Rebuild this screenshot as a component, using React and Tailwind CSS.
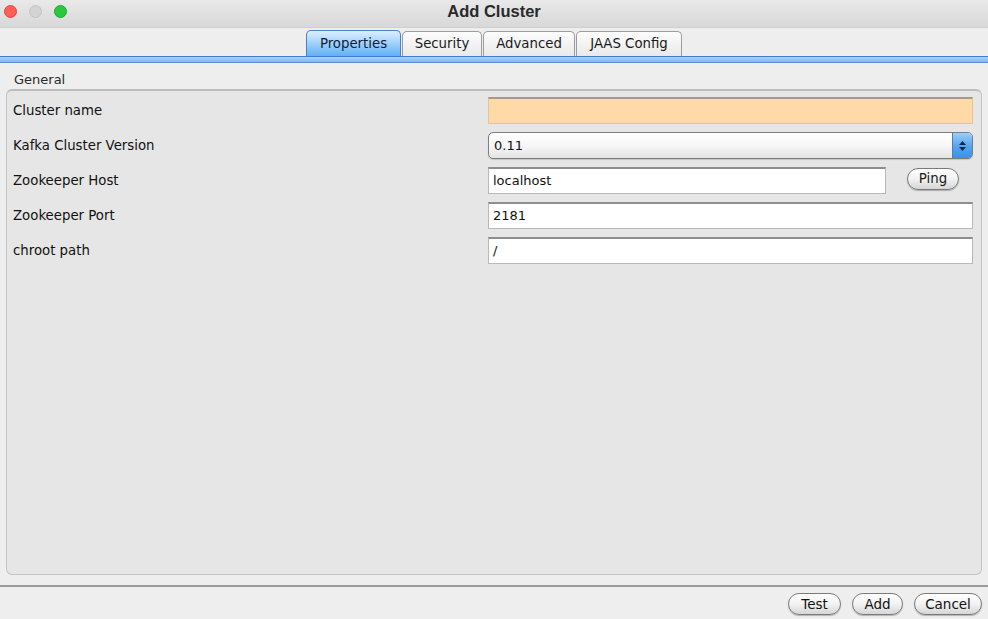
export default function App() {
  const font = { fontFamily: '"DejaVu Sans", "Noto Sans", sans-serif' };
  const rows = [
    { label: "Cluster name", kind: "orange" },
    { label: "Kafka Cluster Version", kind: "combo", value: "0.11" },
    { label: "Zookeeper Host", kind: "ping", value: "localhost" },
    { label: "Zookeeper Port", kind: "text", value: "2181" },
    { label: "chroot path", kind: "text", value: "/" },
  ];
  const field =
    "h-[27px] border border-[#b9b9b9] border-t-[#8e8e8e] border-t-2 flex items-center px-[4px] text-[13px] text-[#111]";
  return (
    <div
      className="w-[988px] h-[619px] bg-[#eeeeee] flex flex-col overflow-hidden text-[#1a1a1a]"
      style={font}
    >
      {/* Title bar */}
      <div className="relative h-[28px] shrink-0 bg-gradient-to-b from-[#e9e9e9] to-[#d8d8d8] border-b border-[#cfcfcf]">
        <div className="absolute left-[4px] top-[5px] flex gap-[12px]">
          <div className="w-[13px] h-[13px] rounded-full bg-[#fe5f57] border border-[#e2463f]" />
          <div className="w-[13px] h-[13px] rounded-full bg-[#d3d3d3] border border-[#c4c4c4]" />
          <div className="w-[13px] h-[13px] rounded-full bg-[#29c83f] border border-[#1eaa30]" />
        </div>
        <div
          className="text-center pt-0 leading-[22px] text-[16.5px] font-bold text-[#2a2a2a]"
          style={{ fontFamily: '"Liberation Sans", Arial, sans-serif' }}
        >
          Add Cluster
        </div>
      </div>

      {/* Tabs */}
      <div className="flex justify-center gap-[1px] pt-[1px] h-[28px] shrink-0 items-end">
        <div className="h-[26px] w-[95px] rounded-t-[5px] border border-b-0 border-[#4d7fc4] bg-gradient-to-b from-[#dcefff] via-[#9fd0fb] to-[#5fb0f4] flex items-center justify-center text-[13.3px] text-[#0d1d3a]">
          Properties
        </div>
        {[
          ["Security", "w-[80px]"],
          ["Advanced", "w-[92px]"],
          ["JAAS Config", "w-[106px]"],
        ].map(([t, w]) => (
          <div
            key={t}
            className={`h-[25px] ${w} rounded-t-[5px] border border-b-0 border-[#9c9c9c] bg-gradient-to-b from-[#fdfdfd] to-[#e9e9e9] flex items-center justify-center text-[13.3px] text-[#1a1a1a]`}
          >
            {t}
          </div>
        ))}
      </div>
      <div className="h-[7px] shrink-0 border-t border-[#3f7cc8] border-b border-b-[#5c8fcf] bg-gradient-to-b from-[#a8d3fa] to-[#7db9f2]" />

      {/* General group */}
      <div className="px-[14px] pt-[9px] text-[13px] text-[#2a2a2a] leading-[15px]">
        General
      </div>
      <div className="mx-[6px] mt-[2px] flex-1 rounded-[6px] border border-[#c4c4c4] border-t-2 border-t-[#bdbdbd] bg-[#e6e6e6] pt-[6px] pl-[6px] pr-[8px] flex flex-col gap-[8px]">
        {rows.map((r) => (
          <div key={r.label} className="flex items-center h-[27px]">
            <div className="w-[475px] shrink-0 text-[13.3px] text-[#111]">{r.label}</div>
            {r.kind === "orange" && (
              <div className={`${field} flex-1 bg-[#ffdaa8] border-[#e5c598] border-t-[#a79a88]`} />
            )}
            {r.kind === "text" && (
              <div className={`${field} flex-1 bg-white`}>{r.value}</div>
            )}
            {r.kind === "ping" && (
              <>
                <div className={`${field} w-[398px] bg-white`}>{r.value}</div>
                <div className="ml-[21px] h-[22px] w-[52px] -mt-[4px] rounded-full border border-[#7a7a7a] bg-gradient-to-b from-white via-[#f2f2f2] to-[#d6d6d6] flex items-center justify-center text-[13.3px] shadow-[0_1px_1px_rgba(0,0,0,0.25)]">
                  Ping
                </div>
              </>
            )}
            {r.kind === "combo" && (
              <div className="flex-1 h-[27px] rounded-[5px] border border-[#7d7d7d] bg-gradient-to-b from-white via-[#f7f7f7] to-[#e4e4e4] flex items-center overflow-hidden shadow-[0_1px_1px_rgba(0,0,0,0.15)]">
                <div className="flex-1 px-[5px] text-[13px] text-[#111]">{r.value}</div>
                <div className="w-[20px] h-full bg-gradient-to-b from-[#9ccdf7] via-[#5aa7ee] to-[#3d8ee6] border-l border-[#4a7ec2] flex flex-col items-center justify-center gap-[2px]">
                  <svg width="7" height="4" viewBox="0 0 7 4"><path d="M0 4 L3.5 0 L7 4Z" fill="#0f2a55" /></svg>
                  <svg width="7" height="4" viewBox="0 0 7 4"><path d="M0 0 L3.5 4 L7 0Z" fill="#0f2a55" /></svg>
                </div>
              </div>
            )}
          </div>
        ))}
      </div>

      {/* Bottom */}
      <div className="mt-[10px] h-[34px] shrink-0 border-t-2 border-[#9a9a9a] bg-[#eeeeee] flex justify-end items-start pt-[6px] pr-[6px] gap-[11px]">
        {[
          ["Test", "w-[53px]"],
          ["Add", "w-[51px]"],
          ["Cancel", "w-[68px]"],
        ].map(([t, w]) => (
          <div
            key={t}
            className={`${w} h-[22px] rounded-full border border-[#7a7a7a] bg-gradient-to-b from-white via-[#f2f2f2] to-[#d6d6d6] flex items-center justify-center text-[13.5px] text-[#111] shadow-[0_1px_1px_rgba(0,0,0,0.25)]`}
          >
            {t}
          </div>
        ))}
      </div>
    </div>
  );
}
